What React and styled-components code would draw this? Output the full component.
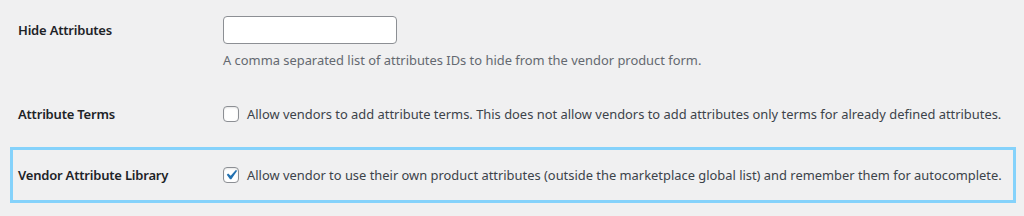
import styled, { createGlobalStyle } from 'styled-components';

const GlobalStyle = createGlobalStyle`
  html, body {
    margin: 0;
    padding: 0;
    background: #f0f0f1;
  }
  body {
    font-family: 'Noto Sans', 'Open Sans', sans-serif;
    color: #3c434a;
    -webkit-font-smoothing: antialiased;
  }
`;

const FormTable = styled.div`
  display: flex;
  flex-direction: column;
  width: 1006px;
  margin-left: 10px;
`;

const Row = styled.div`
  display: grid;
  grid-template-columns: 205px 1fr;
  align-items: ${({ $top }) => ($top ? 'start' : 'center')};
  box-sizing: border-box;
  height: ${({ $height }) => $height}px;
  padding: ${({ $top }) => ($top ? '13px 5px 0' : '0 5px')};
  border: 3px solid ${({ $highlight }) => ($highlight ? '#85d2fb' : 'transparent')};
`;

const Label = styled.div`
  font-size: 13px;
  font-weight: 600;
  letter-spacing: -0.2px;
  color: #1d2327;
  line-height: 28px;
`;

const Field = styled.div`
  display: flex;
  flex-direction: column;
`;

const TextInput = styled.input`
  box-sizing: border-box;
  width: 174px;
  height: 28px;
  margin: 0;
  padding: 0 8px;
  border: 1px solid #8c8f94;
  border-radius: 4px;
  background: #fff;
  font: inherit;
`;

const Description = styled.p`
  margin: 6px 0 0;
  font-size: 12.9px;
  line-height: 20px;
  color: #646970;
  white-space: nowrap;
`;

const CheckLabel = styled.label`
  display: flex;
  align-items: center;
  gap: 8px;
  font-size: 12.9px;
  line-height: 20px;
  color: #3c434a;
  white-space: nowrap;
`;

const Box = styled.span`
  box-sizing: border-box;
  width: 16px;
  height: 16px;
  flex: none;
  display: flex;
  align-items: center;
  justify-content: center;
  border: 1px solid #8c8f94;
  border-radius: 4px;
  background: #fff;
  box-shadow: inset 0 1px 2px rgba(0, 0, 0, 0.1);
  svg {
    margin: -3px;
  }
`;

function Checkbox({ checked }) {
  return (
    <Box>
      {checked && (
        <svg width="20" height="20" viewBox="0 0 20 20">
          <path
            d="M14.83 4.89l1.34.94-5.81 8.38H9.02L5.78 9.67l1.34-1.25 2.57 2.4z"
            fill="#2271b1"
          />
        </svg>
      )}
    </Box>
  );
}

export default function App() {
  return (
    <>
      <GlobalStyle />
      <FormTable>
        <Row $top $height={81}>
          <Label>Hide Attributes</Label>
          <Field>
            <TextInput type="text" />
            <Description>
              A comma separated list of attributes IDs to hide from the vendor product form.
            </Description>
          </Field>
        </Row>
        <Row $height={66}>
          <Label>Attribute Terms</Label>
          <CheckLabel>
            <Checkbox />
            Allow vendors to add attribute terms. This does not allow vendors to add attributes only terms for already defined attributes.
          </CheckLabel>
        </Row>
        <Row $highlight $height={56}>
          <Label>Vendor Attribute Library</Label>
          <CheckLabel>
            <Checkbox checked />
            Allow vendor to use their own product attributes (outside the marketplace global list) and remember them for autocomplete.
          </CheckLabel>
        </Row>
      </FormTable>
    </>
  );
}
